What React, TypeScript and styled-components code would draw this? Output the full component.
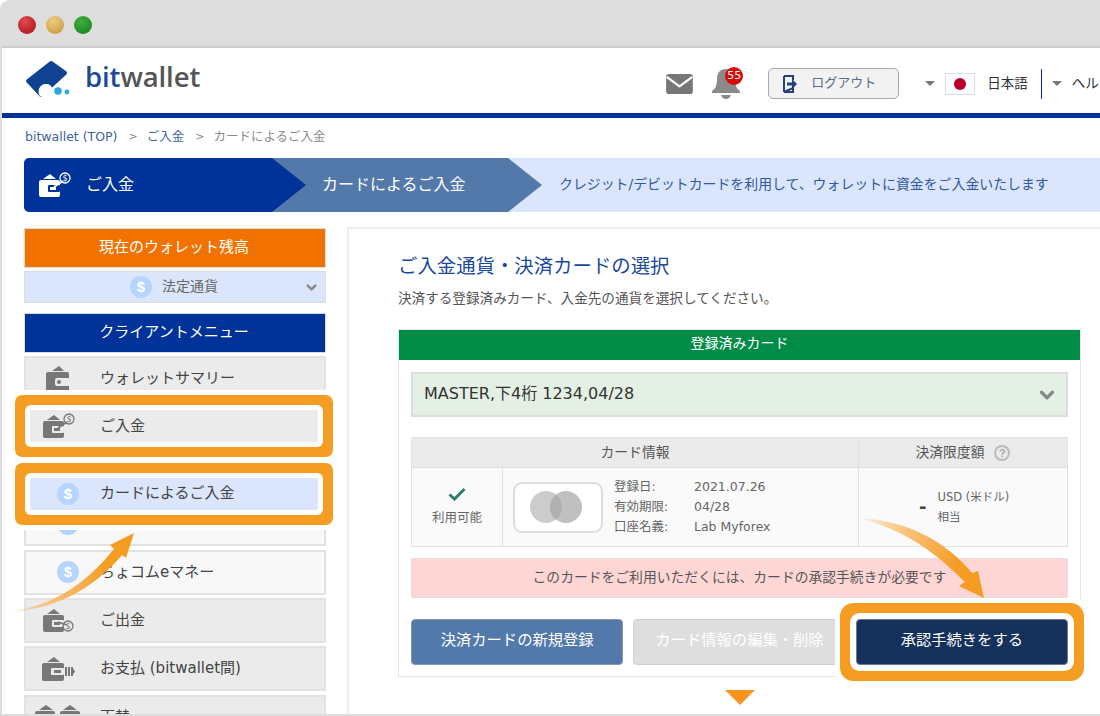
import React from "react";
import styled, { createGlobalStyle } from "styled-components";
import { ChevronDown } from "lucide-react";

const Global = createGlobalStyle`
  html, body { margin: 0; padding: 0; background: #fff; }
  body { font-family: "DejaVu Sans", "Noto Sans CJK JP", "Noto Sans", sans-serif; color: #555; line-height: 1.4; }
  * { box-sizing: border-box; }
`;

const Page = styled.div`
  position: relative; width: 1100px; height: 716px; overflow: hidden; background: #fff;
`;
const Frame = styled.div`
  width: 1100px; height: 716px; display: flex; flex-direction: column; overflow: hidden;
  border-left: 2px solid #ddd; border-bottom: 2px solid #ddd; border-top-left-radius: 9px;
`;
const TitleBar = styled.div`
  flex: 0 0 48px; display: flex; align-items: center; gap: 10px; padding: 3px 0 0 18px;
  margin-left: -2px; background: #ddd; border-bottom: 2px solid #ccc; border-top-left-radius: 9px;
`;
const Light = styled.span<{ $a: string; $b: string }>`
  width: 18px; height: 18px; border-radius: 50%;
  background: radial-gradient(circle at 40% 30%, ${p => p.$a}, ${p => p.$b});
`;
const Header = styled.header`
  flex: 0 0 70px; display: flex; align-items: center; padding: 0 0 6px 22px;
  border-bottom: 5px solid #003399; overflow: hidden;
`;
const LogoMark = styled.svg` flex: none; `;
const LogoText = styled.div`
  flex: none; margin-left: 13px; font-family: "Open Sans", sans-serif; font-weight: 600; font-size: 27.5px; letter-spacing: -0.1px; color: #555;
  line-height: 30px; margin-top: -2px;
  span { color: #1a4b94; }
`;
const NavGroup = styled.div`
  flex: none; display: flex; align-items: center; margin: 12px 0 0 466px;
`;
const BellWrap = styled.div` position: relative; margin-left: 17px; width: 32px; height: 32px; flex: none; `;
const Badge = styled.span`
  position: absolute; top: -1px; right: -1px; width: 18px; height: 18px; border-radius: 50%;
  background: #d90a0a; color: #fff; font-size: 11px; line-height: 18px; text-align: center;
`;
const LogoutButton = styled.div`
  margin-left: 26px; flex: none; width: 131px; height: 31px; display: flex; align-items: center; gap: 14px; padding-left: 14px;
  background: #f2f2f2; border: 1px solid #aaa; border-radius: 5px; color: #5a6b8c; font-size: 13px;
`;
const Caret = styled.span<{ $ml: number }>`
  flex: none; width: 0; height: 0; border-left: 5px solid transparent; border-right: 5px solid transparent; border-top: 5px solid #777;
  margin-left: ${p => p.$ml}px;
`;
const Flag = styled.span`
  flex: none; margin-left: 10px; width: 30px; height: 22px; border: 1px solid #ddd; background: #fff;
  display: flex; align-items: center; justify-content: center;
  &::after { content: ""; width: 12px; height: 12px; border-radius: 50%; background: #bc002d; }
`;
const NavText = styled.span<{ $ml: number }>`
  flex: none; font-size: 13.5px; color: #333; margin-left: ${p => p.$ml}px;
`;
const NavDivider = styled.span`
  flex: none; width: 1px; height: 30px; background: #003399; margin-left: 13px;
`;
const Body = styled.div` flex: 1; min-height: 0; padding-left: 22px; `;
const Crumbs = styled.nav`
  height: 40px; display: flex; align-items: center; padding: 0 0 2px 1px; font-size: 12.5px; color: #8a8a8a;
  a { color: #3f6399; }
  i { font-style: normal; font-size: 11px; margin: 0 9px 0 11px; color: #888; }
`;
const Steps = styled.div`
  height: 54px; display: flex; align-items: center; background: #dbe6fc; border-radius: 5px 0 0 5px; overflow: hidden; margin-bottom: 15px;
`;
const StepFirst = styled.div`
  position: relative; z-index: 2; flex: 0 0 282px; height: 54px; display: flex; align-items: center; gap: 15px; padding-left: 14px;
  background: #003399; color: #fff; font-size: 16px;
  clip-path: polygon(0 0, 248px 0, 282px 27px, 248px 54px, 0 54px);
`;
const StepSecond = styled.div`
  position: relative; z-index: 1; flex: 0 0 270px; margin-left: -34px; height: 54px; display: flex; align-items: center; padding-left: 50px;
  background: #5379ab; color: #fff; font-size: 16px;
  clip-path: polygon(0 0, 236px 0, 270px 27px, 236px 54px, 0 54px);
`;
const StepNote = styled.div` margin-left: 17px; font-size: 13.9px; color: #2d5aa0; white-space: nowrap; `;
const Columns = styled.div` display: flex; gap: 21px; align-items: flex-start; `;
const Sidebar = styled.aside` flex: 0 0 302px; padding-top: 1px; display: flex; flex-direction: column; `;
const SideHead = styled.div<{ $bg: string }>`
  height: 40px; display: flex; align-items: center; justify-content: center; background: ${p => p.$bg};
  border: 1px solid #ddd; color: #fff; font-size: 15px; padding: 0 2px 2px 0;
`;
const Currency = styled.div`
  height: 32px; margin: 3px 0 10px; position: relative; display: flex; align-items: center; justify-content: center; gap: 10px;
  background: #dbe6fc; border: 1px solid #ddd; font-size: 14px; color: #666; padding-right: 2px;
  svg { position: absolute; right: 6px; top: 8px; color: #888; }
`;
const Menu = styled.div` margin-top: 3px; display: flex; flex-direction: column; gap: 3.4px; `;
const Item = styled.div<{ $light?: boolean }>`
  position: relative; height: 45px; flex: none; display: flex; align-items: center;
  background: ${p => (p.$light ? "#f8f8f8" : "#ebebeb")}; border: 2px solid #e2e2e2; font-size: 15px; color: #444;
`;
const IconSlot = styled.span`
  width: 64px; margin-right: 10px; flex: none; display: flex; justify-content: center; align-items: center;
`;
const FocusRow = styled.div<{ $top: number; $bg: string }>`
  position: absolute; z-index: 2; top: ${p => p.$top}px; left: 4px; right: 6px; height: 32px; display: flex; align-items: center;
  background: ${p => p.$bg}; border-radius: 2px; color: #444;
  box-shadow: 0 0 0 5px #fff, 0 0 0 15px #f59c23, 0 0 0 20px #fff;
  ${IconSlot} { width: 56px; margin-right: 14px; }
`;
const Dollar = styled.span<{ $shift?: boolean }>`
  width: 22px; height: 22px; border-radius: 50%; flex: none; background: #b5d5ff; color: #fff; font: 700 15px/22px "Liberation Sans", sans-serif; text-align: center;
  margin-left: ${p => (p.$shift ? "20px" : "0")};
`;
const Panel = styled.main`
  flex: 0 0 780px; border-left: 2px solid #eee; border-top: 2px solid #eee; padding: 23px 0 0 49px; height: 500px;
`;
const Title = styled.h1` margin: 1px 0 0; font-size: 19.4px; line-height: 28px; font-weight: 400; color: #1a4a9c; `;
const Lead = styled.p` margin: 7px 0 21px; font-size: 13.6px; line-height: 20px; color: #555; `;
const CardBox = styled.section` width: 683px; border: 1px solid #e6e6e6; padding-bottom: 11px; `;
const GreenHead = styled.div`
  height: 30px; background: #008c46; color: #fff; font-size: 14px; display: flex; align-items: center; justify-content: center; padding-bottom: 2px;
`;
const Inner = styled.div` padding: 12px 12px 0; `;
const Select = styled.div`
  height: 45px; display: flex; align-items: center; justify-content: space-between; padding: 0 8px 0 11px;
  background: #e3f0e3; border: 2px solid #ddd; font-size: 16px; color: #333;
  svg { color: #888; }
`;
const InfoTable = styled.div`
  margin-top: 20px; display: grid; grid-template-columns: 90px 356px 1fr; grid-template-rows: 30px 78px;
  border: 1px solid #e2e2e2; background: #fafafa;
`;
const HeadCell = styled.div<{ $span?: number }>`
  grid-column: span ${p => p.$span ?? 1}; background: #ebebeb; border-bottom: 1px solid #e0e0e0; display: flex; align-items: center; justify-content: center; gap: 10px;
  font-size: 13.8px; color: #555;
  & + & { border-left: 1px solid #e0e0e0; }
`;
const Help = styled.span`
  width: 16px; height: 16px; border: 2px solid #bbb; border-radius: 50%; color: #aaa; font: 700 11px/12px "Liberation Sans", sans-serif; text-align: center;
`;
const StatusCell = styled.div`
  display: flex; flex-direction: column; align-items: center; justify-content: center; gap: 8px; font-size: 12.5px; color: #666;
`;
const CardCell = styled.div`
  border-left: 1px solid #e0e0e0; display: flex; align-items: center; padding-left: 10px; gap: 11px; font-size: 12.5px; color: #666;
`;
const CardThumb = styled.div`
  width: 90px; height: 51px; border: 2px solid #ddd; border-radius: 9px; background: #fff; flex: none; display: flex; align-items: center; justify-content: center;
`;
const Facts = styled.dl`
  margin: 0; display: grid; grid-template-columns: 80px auto; grid-auto-rows: 20px; align-items: center;
  dt, dd { margin: 0; white-space: nowrap; }
`;
const LimitCell = styled.div`
  border-left: 1px solid #e0e0e0; display: flex; align-items: center; padding-left: 60px; gap: 11px; font-size: 11.5px; line-height: 20px; color: #666;
  b { font-size: 18px; font-weight: 700; color: #444; }
`;
const Alert = styled.div`
  margin-top: 11px; height: 40px; display: flex; align-items: center; justify-content: center; background: #ffd6d6; border: 1px solid #e6dcdc; border-radius: 2px;
  font-size: 13.8px; color: #555;
`;
const Actions = styled.div` margin-top: 21px; display: flex; gap: 10px; `;
const Action = styled.div<{ $bg: string; $line: string; $ring?: boolean }>`
  flex: 1; height: 46px; display: flex; align-items: center; justify-content: center; background: ${p => p.$bg}; border: 1px solid ${p => p.$line}; border-radius: 4px;
  color: #fff; font-size: 15.3px; white-space: nowrap; padding-bottom: 2px;
  ${p => p.$ring && `position: relative; z-index: 1; box-shadow: 0 0 0 6px #fff, 0 0 0 16px #f59c23, 0 0 0 21px #fff;`}
`;
const NextMark = styled.div`
  width: 0; height: 0; margin: 13px 0 0 327px; border-left: 15px solid transparent; border-right: 15px solid transparent; border-top: 15px solid #f7941d;
`;
const ArrowLayer = styled.svg` position: absolute; inset: 0; z-index: 3; pointer-events: none; `;

const W = "#777";

function WalletBody({ c, cut = "#ebebeb" }: { c: string; cut?: string }) {
  return (
    <>
      <path d="M5 7 L12 2 L18 7Z" fill={c} />
      <rect x="1" y="8" width="21" height="17" rx="2" fill={c} />
      <rect x="10" y="13" width="12" height="7" rx="1" fill={cut} />
    </>
  );
}
const IconDeposit = ({ c = W, cut }: { c?: string; cut?: string }) => (
  <svg width="33" height="26" viewBox="0 0 33 26">
    <WalletBody c={c} cut={cut} />
    <rect x="12" y="15" width="6" height="3" fill={c} />
    <path d="M16 15l9-6" stroke={c} strokeWidth="1.8" fill="none" />
    <circle cx="27" cy="6" r="5" fill="none" stroke={c} strokeWidth="1.3" />
    <text x="27" y="9" fontSize="8" textAnchor="middle" fill={c}>$</text>
  </svg>
);
const IconSummary = () => (
  <svg width="26" height="28" viewBox="0 0 26 28">
    <path d="M7 6 L14 1 L19 6Z" fill={W} />
    <rect x="1" y="7" width="23" height="21" rx="2" fill={W} />
    <rect x="10" y="13" width="15" height="8" rx="2" fill="#ebebeb" />
    <circle cx="14" cy="17" r="2" fill={W} />
  </svg>
);
const IconWithdraw = () => (
  <svg width="33" height="26" viewBox="0 0 33 26">
    <WalletBody c={W} />
    <rect x="12" y="15" width="6" height="3" fill={W} />
    <path d="M16 15l9 3" stroke={W} strokeWidth="1.8" fill="none" />
    <circle cx="26" cy="19" r="5" fill="none" stroke={W} strokeWidth="1.3" />
    <text x="26" y="22" fontSize="8" textAnchor="middle" fill={W}>$</text>
  </svg>
);
const IconPay = () => (
  <svg width="34" height="26" viewBox="0 0 34 26">
    <path d="M6 6 L13 1 L19 6Z" fill={W} />
    <rect x="1" y="7" width="22" height="18" rx="2" fill={W} />
    <rect x="10" y="12" width="13" height="7" rx="1" fill="#ebebeb" />
    <rect x="13" y="14" width="7" height="3" fill={W} />
    <path d="M25 11v9M28 11v9M31 11v9" stroke={W} strokeWidth="2" />
    <path d="M31 11l3 4.500-3 4.500z" fill={W} />
  </svg>
);
const IconExchange = () => (
  <svg width="46" height="26" viewBox="0 0 46 26">
    <path d="M4 6 L11 1 L18 6Z" fill={W} />
    <rect x="0" y="7" width="20" height="18" rx="2" fill={W} />
    <path d="M28 6 L35 1 L42 6Z" fill={W} />
    <rect x="25" y="7" width="20" height="18" rx="2" fill={W} />
  </svg>
);

export default function App() {
  return (
    <Page>
      <Global />
      <Frame>
        <TitleBar>
          <Light $a="#e04a50" $b="#a80f16" />
          <Light $a="#f0cc80" $b="#c29336" />
          <Light $a="#3fae3f" $b="#137f13" />
        </TitleBar>
        <Header>
          <LogoMark width="48" height="40" viewBox="24 58 48 40">
            <path d="M51 63 L65 73 L41 95 L28 81Z" fill="#0f4391" stroke="#0f4391" strokeWidth="4" strokeLinejoin="round" />
            <circle cx="46" cy="91" r="7" fill="#fff" />
            <path d="M42 96 A5 5 0 0 1 50 87" stroke="#fff" strokeWidth="3" fill="none" />
            <circle cx="58" cy="91" r="3.800" fill="#2aa8e0" />
            <circle cx="67" cy="92" r="2.400" fill="#2aa8e0" />
          </LogoMark>
          <LogoText><span>bit</span>wallet</LogoText>
          <NavGroup>
            <svg width="27" height="20" viewBox="0 0 28 21">
              <rect width="28" height="21" rx="3" fill="#777" />
              <path d="M0.500 3 L14 13 L27.500 3" stroke="#fff" strokeWidth="2.500" fill="none" />
            </svg>
            <BellWrap>
              <svg width="32" height="32" viewBox="0 0 32 32">
                <path d="M16 1c-6 0-9 4-9 10 0 7-2 10-5 12v2h28v-2c-3-2-5-5-5-12 0-6-3-10-9-10z" fill="#8a8a8a" />
                <path d="M11 27h10c-1 3-3 4-5 4s-4-1-5-4z" fill="#8a8a8a" />
              </svg>
              <Badge>55</Badge>
            </BellWrap>
            <LogoutButton>
              <svg width="14" height="18" viewBox="0 0 14 18">
                <path d="M1 1h9v4M10 13v4H1z" fill="none" stroke="#24407e" strokeWidth="2" />
                <path d="M1 1v16" stroke="#24407e" strokeWidth="2" />
                <path d="M4 7.500h5V4l5 5-5 5v-3.500H4z" fill="#24407e" />
              </svg>
              <span>ログアウト</span>
            </LogoutButton>
            <Caret $ml={26} />
            <Flag />
            <NavText $ml={12}>日本語</NavText>
            <NavDivider />
            <Caret $ml={10} />
            <NavText $ml={10}>ヘルプ</NavText>
          </NavGroup>
        </Header>
        <Body>
          <Crumbs>
            <a>bitwallet (TOP)</a><i>&gt;</i><a>ご入金</a><i>&gt;</i><span>カードによるご入金</span>
          </Crumbs>
          <Steps>
            <StepFirst>
              <IconDeposit c="#fff" cut="#003399" />
              <span>ご入金</span>
            </StepFirst>
            <StepSecond>カードによるご入金</StepSecond>
            <StepNote>クレジット/デビットカードを利用して、ウォレットに資金をご入金いたします</StepNote>
          </Steps>
          <Columns>
            <Sidebar>
              <SideHead $bg="#f27200">現在のウォレット残高</SideHead>
              <Currency>
                <Dollar>$</Dollar>
                <span>法定通貨</span>
                <ChevronDown size={15} strokeWidth={4} />
              </Currency>
              <SideHead $bg="#003399">クライアントメニュー</SideHead>
              <Menu>
                <Item><IconSlot><IconSummary /></IconSlot>ウォレットサマリー</Item>
                <Item>
                  <FocusRow $top={4} $bg="#ebebeb">
                    <IconSlot><IconDeposit /></IconSlot>ご入金
                  </FocusRow>
                </Item>
                <Item $light>
                  <FocusRow $top={23} $bg="#dbe6fc">
                    <IconSlot><Dollar $shift>$</Dollar></IconSlot>カードによるご入金
                  </FocusRow>
                </Item>
                <Item $light><IconSlot><Dollar $shift>$</Dollar></IconSlot></Item>
                <Item $light><IconSlot><Dollar $shift>$</Dollar></IconSlot>ちょコムeマネー</Item>
                <Item><IconSlot><IconWithdraw /></IconSlot>ご出金</Item>
                <Item><IconSlot><IconPay /></IconSlot>お支払 (bitwallet間)</Item>
                <Item><IconSlot><IconExchange /></IconSlot>両替</Item>
              </Menu>
            </Sidebar>
            <Panel>
              <Title>ご入金通貨・決済カードの選択</Title>
              <Lead>決済する登録済みカード、入金先の通貨を選択してください。</Lead>
              <CardBox>
                <GreenHead>登録済みカード</GreenHead>
                <Inner>
                  <Select>
                    <span>MASTER,下4桁 1234,04/28</span>
                    <ChevronDown size={22} strokeWidth={3.5} />
                  </Select>
                  <InfoTable>
                    <HeadCell $span={2}>カード情報</HeadCell>
                    <HeadCell>決済限度額 <Help>?</Help></HeadCell>
                    <StatusCell>
                      <svg width="18" height="14" viewBox="0 0 18 14">
                        <path d="M1.500 7.500 L6.500 12 L16.500 2" fill="none" stroke="#2e7d6b" strokeWidth="3" />
                      </svg>
                      <span>利用可能</span>
                    </StatusCell>
                    <CardCell>
                      <CardThumb>
                        <svg width="58" height="34" viewBox="0 0 58 34">
                          <circle cx="17" cy="17" r="16" fill="#ccc" />
                          <circle cx="37" cy="17" r="16" fill="#bdbdbd" fillOpacity="0.95" />
                          <path d="M27 4.500a16 16 0 0 1 0 25a16 16 0 0 1 0-25z" fill="#b0b0b0" />
                        </svg>
                      </CardThumb>
                      <Facts>
                        <dt>登録日:</dt><dd>2021.07.26</dd>
                        <dt>有効期限:</dt><dd>04/28</dd>
                        <dt>口座名義:</dt><dd>Lab Myforex</dd>
                      </Facts>
                    </CardCell>
                    <LimitCell>
                      <b>-</b>
                      <div>USD (米ドル)<br />相当</div>
                    </LimitCell>
                  </InfoTable>
                  <Alert>このカードをご利用いただくには、カードの承認手続きが必要です</Alert>
                  <Actions>
                    <Action $bg="#5379ab" $line="#8a97a8">決済カードの新規登録</Action>
                    <Action $bg="#dedede" $line="#cfcfcf">カード情報の編集・削除</Action>
                    <Action $bg="#16305c" $line="#6a7a95" $ring>承認手続きをする</Action>
                  </Actions>
                </Inner>
              </CardBox>
              <NextMark />
            </Panel>
          </Columns>
        </Body>
      </Frame>
      <ArrowLayer width="1100" height="716" viewBox="0 0 1100 716">
        <defs>
          <linearGradient id="fadeLeft" gradientUnits="userSpaceOnUse" x1="5" y1="612" x2="125" y2="545">
            <stop offset="0" stopColor="#f59c23" stopOpacity="0" />
            <stop offset="0.35" stopColor="#f8b660" stopOpacity="0.85" />
            <stop offset="0.8" stopColor="#f59c23" />
          </linearGradient>
          <linearGradient id="fadeRight" gradientUnits="userSpaceOnUse" x1="858" y1="518" x2="970" y2="580">
            <stop offset="0" stopColor="#f59c23" stopOpacity="0" />
            <stop offset="0.4" stopColor="#f8b660" stopOpacity="0.85" />
            <stop offset="0.85" stopColor="#f59c23" />
          </linearGradient>
        </defs>
        <path d="M5 612 C50 608 85 585 114 549 L110 545 L134 533 L126 558 L122 555 C92 590 55 610 5 612Z" fill="url(#fadeLeft)" />
        <path d="M858 518 C905 520 945 540 972 573 L978 571 L984 598 L959 586 L965 582 C935 552 905 530 858 518Z" fill="url(#fadeRight)" />
      </ArrowLayer>
    </Page>
  );
}
